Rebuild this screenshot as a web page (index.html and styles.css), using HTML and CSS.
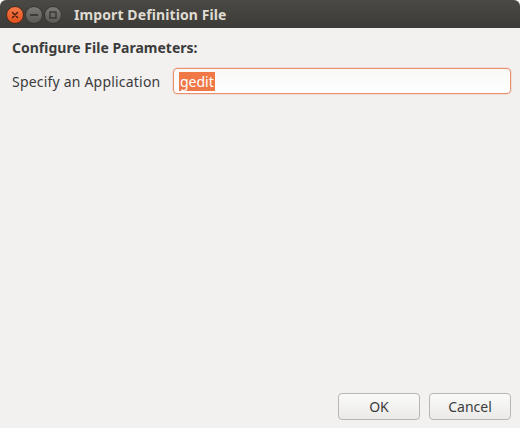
FILE: index.html
```html
<!DOCTYPE html>
<html>
<head>
<meta charset="utf-8">
<link rel="stylesheet" href="styles.css">
</head>
<body>
<div class="window">
  <div class="titlebar">
    <div class="controls">
      <span class="wbtn close"><svg width="8" height="8" viewBox="0 0 8 8"><path d="M1.5 1.5L6.5 6.5M6.5 1.5L1.5 6.5" stroke="#3a1a0c" stroke-width="1.3" stroke-linecap="round"/></svg></span>
      <span class="wbtn"><svg width="10" height="8" viewBox="0 0 10 8"><path d="M1.5 4H8.5" stroke="#2f2e2b" stroke-width="1.4" stroke-linecap="round"/></svg></span>
      <span class="wbtn"><svg width="10" height="10" viewBox="0 0 10 10"><rect x="2" y="2" width="6" height="6" fill="none" stroke="#2f2e2b" stroke-width="1.2"/></svg></span>
    </div>
    <div class="title">Import Definition File</div>
  </div>
  <div class="content">
    <div class="heading">Configure File Parameters:</div>
    <div class="row">
      <label class="label">Specify an Application</label>
      <div class="input"><span class="sel">gedit</span></div>
    </div>
    <div class="spacer"></div>
    <div class="buttons">
      <button class="btn">OK</button>
      <button class="btn">Cancel</button>
    </div>
  </div>
</div>
</body>
</html>
```
FILE: styles.css
```css
html, body {
  margin: 0;
  padding: 0;
  width: 520px;
  height: 428px;
  background: #ffffff;
  overflow: hidden;
}
.window {
  width: 520px;
  height: 428px;
  display: flex;
  flex-direction: column;
  font-family: "Noto Sans", "DejaVu Sans", sans-serif;
  font-size: 14px;
  color: #3c3c3c;
}
.titlebar {
  height: 28px;
  flex: none;
  display: flex;
  align-items: center;
  background: linear-gradient(#4a4944, #3c3b37);
  border-radius: 6px 6px 0 0;
  box-sizing: border-box;
  padding-left: 6px;
}
.controls {
  display: flex;
  gap: 1px;
  margin-top: 1px;
}
.wbtn {
  width: 18px;
  height: 18px;
  border-radius: 50%;
  box-sizing: border-box;
  display: flex;
  align-items: center;
  justify-content: center;
  background: linear-gradient(#7b7a75, #5a5955);
  border: 1px solid #363531;
}
.wbtn.close {
  background: linear-gradient(#f6794a, #e0501c);
  border-color: #4a2a1c;
}
.title {
  margin-left: 12px;
  font-weight: bold;
  font-size: 14px;
  color: #dfdbd2;
  letter-spacing: 0.1px;
}
.content {
  flex: 1;
  background: #f2f1f0;
  display: flex;
  flex-direction: column;
  padding: 10px 9px 8px 12px;
}
.heading {
  font-weight: bold;
  font-size: 14px;
  line-height: 20px;
  color: #3c3c3c;
}
.row {
  display: flex;
  align-items: center;
  margin-top: 10px;
}
.label {
  width: 161px;
  flex: none;
  font-size: 14px;
  letter-spacing: 0.2px;
  color: #3c3c3c;
}
.input {
  flex: 1;
  height: 26px;
  box-sizing: border-box;
  border: 1px solid #e9906e;
  border-radius: 4px;
  background: linear-gradient(#f8f8f7, #ffffff);
  box-shadow: 0 0 0 0.5px rgba(233,144,110,0.4);
  display: flex;
  align-items: center;
  padding-left: 5px;
}
.sel {
  background: #f07746;
  color: #ffffff;
  font-size: 14px;
  line-height: 19px;
  padding: 0 1px;
}
.spacer {
  flex: 1;
}
.buttons {
  display: flex;
  justify-content: flex-end;
  gap: 9px;
}
.btn {
  width: 82px;
  height: 27px;
  box-sizing: border-box;
  border: 1px solid #b8b6b2;
  border-radius: 4px;
  background: linear-gradient(#fafaf9, #ebeae8);
  font-family: "Noto Sans", "DejaVu Sans", sans-serif;
  font-size: 14px;
  color: #3c3c3c;
  padding: 0;
}
```
